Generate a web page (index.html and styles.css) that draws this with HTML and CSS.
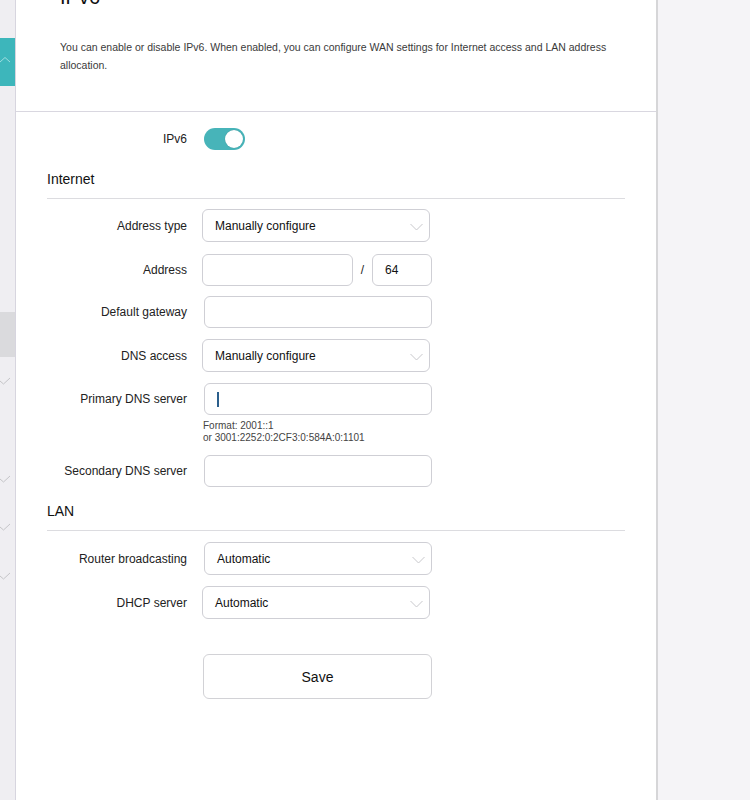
FILE: index.html
```html
<!DOCTYPE html>
<html>
<head>
<meta charset="utf-8">
<link rel="stylesheet" href="styles.css">
</head>
<body>
<div class="layout">
  <aside class="sidebar">
    <div class="sb-space sb-top"></div>
    <div class="sb-active">
      <svg class="sb-chev" width="10" height="8" viewBox="0 0 10 8"><path d="M0 6 L5 1.5 L10 6" fill="none" stroke="#9fdde0" stroke-width="1"/></svg>
    </div>
    <div class="sb-space sb-mid"></div>
    <div class="sb-gray"></div>
    <div class="sb-item"><svg width="10" height="8" viewBox="0 0 10 8"><path d="M0 4 L3.5 7 L10 1" fill="none" stroke="#c4c4c8" stroke-width="1"/></svg></div>
    <div class="sb-item"></div>
    <div class="sb-item"><svg width="10" height="8" viewBox="0 0 10 8"><path d="M0 4 L3.5 7 L10 1" fill="none" stroke="#c4c4c8" stroke-width="1"/></svg></div>
    <div class="sb-item"><svg width="10" height="8" viewBox="0 0 10 8"><path d="M0 4 L3.5 7 L10 1" fill="none" stroke="#c4c4c8" stroke-width="1"/></svg></div>
    <div class="sb-item"><svg width="10" height="8" viewBox="0 0 10 8"><path d="M0 4 L3.5 7 L10 1" fill="none" stroke="#c4c4c8" stroke-width="1"/></svg></div>
  </aside>

  <main class="panel">
    <section class="intro">
      <h1 class="title">IPv6</h1>
      <p class="desc">You can enable or disable IPv6. When enabled, you can configure WAN settings for Internet access and LAN address allocation.</p>
    </section>

    <section class="form">
      <div class="row row-toggle">
        <div class="label">IPv6</div>
        <div class="toggle"><span class="knob"></span></div>
      </div>

      <h2 class="group group-internet">Internet</h2>

      <div class="row r-addrtype">
        <div class="label">Address type</div>
        <div class="select">Manually configure<svg class="chev" width="13" height="8" viewBox="0 0 13 8"><path d="M0.5 1 L6.5 7 L12.5 1" fill="none" stroke="#c8c8cc" stroke-width="1"/></svg></div>
      </div>

      <div class="row r-addr">
        <div class="label">Address</div>
        <div class="field f-addr"></div>
        <span class="slash">/</span>
        <div class="field f-prefix">64</div>
      </div>

      <div class="row r-gw">
        <div class="label">Default gateway</div>
        <div class="field shift"></div>
      </div>

      <div class="row r-dns">
        <div class="label">DNS access</div>
        <div class="select">Manually configure<svg class="chev" width="13" height="8" viewBox="0 0 13 8"><path d="M0.5 1 L6.5 7 L12.5 1" fill="none" stroke="#c8c8cc" stroke-width="1"/></svg></div>
      </div>

      <div class="row r-pdns">
        <div class="label">Primary DNS server</div>
        <div class="field shift"><span class="caret"></span></div>
      </div>
      <div class="hint">Format: 2001::1<br>or 3001:2252:0:2CF3:0:584A:0:1101</div>

      <div class="row r-sdns">
        <div class="label">Secondary DNS server</div>
        <div class="field shift"></div>
      </div>

      <h2 class="group group-lan">LAN</h2>

      <div class="row r-router">
        <div class="label">Router broadcasting</div>
        <div class="select shift">Automatic<svg class="chev" width="13" height="8" viewBox="0 0 13 8"><path d="M0.5 1 L6.5 7 L12.5 1" fill="none" stroke="#c8c8cc" stroke-width="1"/></svg></div>
      </div>

      <div class="row r-dhcp">
        <div class="label">DHCP server</div>
        <div class="select">Automatic<svg class="chev" width="13" height="8" viewBox="0 0 13 8"><path d="M0.5 1 L6.5 7 L12.5 1" fill="none" stroke="#c8c8cc" stroke-width="1"/></svg></div>
      </div>

      <div class="row r-save">
        <div class="label"></div>
        <button class="save">Save</button>
      </div>
    </section>
  </main>

  <div class="rightside"></div>
</div>
</body>
</html>
```

FILE: styles.css
```css
* { box-sizing: border-box; }
html, body { margin: 0; padding: 0; }
body {
  font-family: "Liberation Sans", Arial, sans-serif;
  background: #f5f4f7;
  color: #222;
}
.layout {
  display: flex;
  height: 800px;
  overflow: hidden;
}

/* sidebar */
.sidebar {
  width: 16px;
  flex: none;
  background: #efeef2;
  border-right: 1px solid #d7d5df;
  display: flex;
  flex-direction: column;
}
.sb-top { height: 38px; }
.sb-active {
  height: 48px;
  background: #3db6bb;
  display: flex;
  align-items: center;
}
.sb-chev { margin-left: 0; margin-top: -4px; }
.sb-mid { height: 226px; }
.sb-gray { height: 45px; background: #dadadd; }
.sb-item {
  height: 48.7px;
  display: flex;
  align-items: center;
}
.sb-item svg { margin-left: 0; }

/* panel */
.panel {
  width: 642px;
  flex: none;
  background: #fff;
  border-right: 2px solid #d6d6d8;
}
.rightside { flex: 1; background: #f5f4f7; }

.intro {
  padding: 0 30px 37px 44px;
  border-bottom: 1px solid #d9d7e0;
  margin-top: -15px;
}
.title {
  margin: 0;
  font-size: 20px;
  line-height: 24px;
  font-weight: normal;
  color: #111;
}
.desc {
  margin: 29px 0 0 0;
  font-size: 10.5px;
  line-height: 18px;
  color: #3a3a3a;
}

.form { padding: 0 31px; }

.row {
  display: flex;
  align-items: center;
}
.label {
  width: 140px;
  flex: none;
  text-align: right;
  font-size: 12px;
  color: #222;
  margin-right: 15px;
}

.row-toggle { margin-top: 16px; height: 22px; }
.toggle {
  width: 41px;
  height: 22px;
  border-radius: 11px;
  background: #47b4b9;
  margin-left: 2px;
  display: flex;
  align-items: center;
  justify-content: flex-end;
  padding-right: 2px;
}
.knob {
  width: 18px;
  height: 18px;
  border-radius: 50%;
  background: #fff;
  box-shadow: 0 0 1px rgba(0,0,0,0.25);
}

.group {
  margin: 0;
  font-size: 14px;
  line-height: 20px;
  font-weight: normal;
  color: #111;
  padding-bottom: 9px;
  border-bottom: 1px solid #dcdce0;
}
.group-internet { margin-top: 19px; }
.group-lan { margin-top: 14px; }

.select, .field {
  border: 1px solid #cfcfd5;
  border-radius: 6px;
  background: #fff;
  font-size: 12px;
  color: #111;
  display: flex;
  align-items: center;
}
.select {
  width: 228px;
  height: 33px;
  padding-left: 12px;
  position: relative;
}
.chev { position: absolute; right: 6px; top: 13px; }
.field {
  width: 228px;
  height: 32px;
  padding-left: 12px;
}
.shift { margin-left: 2px; }

.r-addrtype { margin-top: 10px; }
.r-addr { margin-top: 12px; }
.f-addr { width: 151px; }
.slash { width: 19px; text-align: center; font-size: 12px; color: #222; }
.f-prefix { width: 60px; }
.r-gw { margin-top: 10px; }
.r-dns { margin-top: 11px; }
.r-pdns { margin-top: 11px; }
.caret {
  display: block;
  width: 2px;
  height: 15px;
  background: #2b5f8c;
}
.hint {
  margin: 5px 0 0 156px;
  font-size: 10px;
  line-height: 12px;
  color: #444;
}
.r-sdns { margin-top: 11px; }
.r-router { margin-top: 11px; }
.r-dhcp { margin-top: 11px; }
.r-save { margin-top: 35px; }
.save {
  width: 229px;
  height: 45px;
  margin-left: 1px;
  border: 1px solid #d2d2d6;
  border-radius: 6px;
  background: #fff;
  font-family: "Liberation Sans", Arial, sans-serif;
  font-size: 14px;
  color: #111;
}
```
